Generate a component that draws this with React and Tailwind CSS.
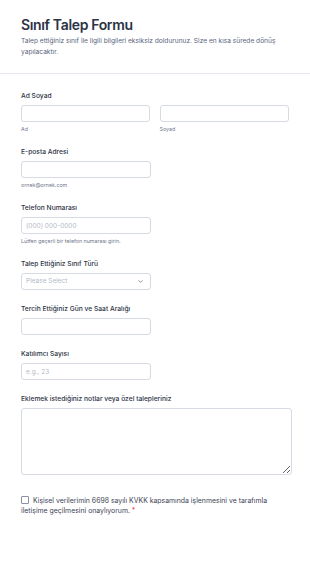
import { ChevronDown } from "lucide-react";

function Label({ children }) {
  return (
    <label className="block text-[6.7px] leading-[10px] font-medium text-[#2c3345]">
      {children}
    </label>
  );
}

function Sub({ children }) {
  return <p className="mt-[3px] text-[5.3px] leading-[8px] text-[#6f768a]">{children}</p>;
}

const inputCls =
  "block h-[17px] rounded-[3px] border border-[#d6dae3] bg-white px-[4px] text-[6.5px] text-[#2c3345] placeholder:text-[#b4b8c7] outline-none";

export default function App() {
  return (
    <div className="min-h-[582px] w-[310px] bg-white font-['Inter',sans-serif]">
      {/* Header */}
      <div className="px-[21px] pt-[16px] pb-[15px]">
        <h1 className="text-[14px] leading-[18px] font-semibold tracking-tight text-[#2c3345]">
          Sınıf Talep Formu
        </h1>
        <p className="mt-[2px] max-w-[262px] text-[6.6px] leading-[11px] text-[#57647e]">
          Talep ettiğiniz sınıf ile ilgili bilgileri eksiksiz doldurunuz. Size en kısa sürede dönüş
          yapılacaktır.
        </p>
      </div>
      <div className="border-b border-[#e6e8ef]" />

      <form className="flex flex-col gap-[14px] px-[21px] pt-[17px]">
        <div>
          <Label>Ad Soyad</Label>
          <div className="mt-[4px] flex gap-[10px]">
            <div className="w-[130px]">
              <input className={`${inputCls} w-full`} />
              <Sub>Ad</Sub>
            </div>
            <div className="w-[131px]">
              <input className={`${inputCls} w-full`} />
              <Sub>Soyad</Sub>
            </div>
          </div>
        </div>

        <div>
          <Label>E-posta Adresi</Label>
          <input className={`${inputCls} mt-[4px] w-[130px]`} />
          <Sub>ornek@ornek.com</Sub>
        </div>

        <div>
          <Label>Telefon Numarası</Label>
          <input className={`${inputCls} mt-[4px] w-[130px]`} placeholder="(000) 000-0000" />
          <Sub>Lütfen geçerli bir telefon numarası girin.</Sub>
        </div>

        <div>
          <Label>Talep Ettiğiniz Sınıf Türü</Label>
          <div className={`${inputCls} mt-[4px] flex w-[130px] items-center justify-between`}>
            <span className="text-[#b4b8c7]">Please Select</span>
            <ChevronDown size={7} strokeWidth={2.5} className="mr-[2px] text-[#57647e]" />
          </div>
        </div>

        <div>
          <Label>Tercih Ettiğiniz Gün ve Saat Aralığı</Label>
          <input className={`${inputCls} mt-[4px] w-[130px]`} />
        </div>

        <div>
          <Label>Katılımcı Sayısı</Label>
          <input className={`${inputCls} mt-[4px] w-[130px]`} placeholder="e.g., 23" />
        </div>

        <div>
          <Label>Eklemek istediğiniz notlar veya özel talepleriniz</Label>
          <textarea className="mt-[4px] block h-[67px] w-[271px] resize rounded-[3px] border border-[#d6dae3] outline-none" />
        </div>

        <p className="mt-[6px] w-[248px] text-[6.9px] leading-[10px] text-[#3e4456]">
          <span className="mr-[4px] inline-block h-[8px] w-[8px] translate-y-[1px] rounded-[1px] border border-[#8b91a5] align-baseline" />
          Kişisel verilerimin 6698 sayılı KVKK kapsamında işlenmesini ve tarafımla iletişime
          geçilmesini onaylıyorum. <span className="text-[#f23a3c]">*</span>
        </p>
      </form>
    </div>
  );
}
